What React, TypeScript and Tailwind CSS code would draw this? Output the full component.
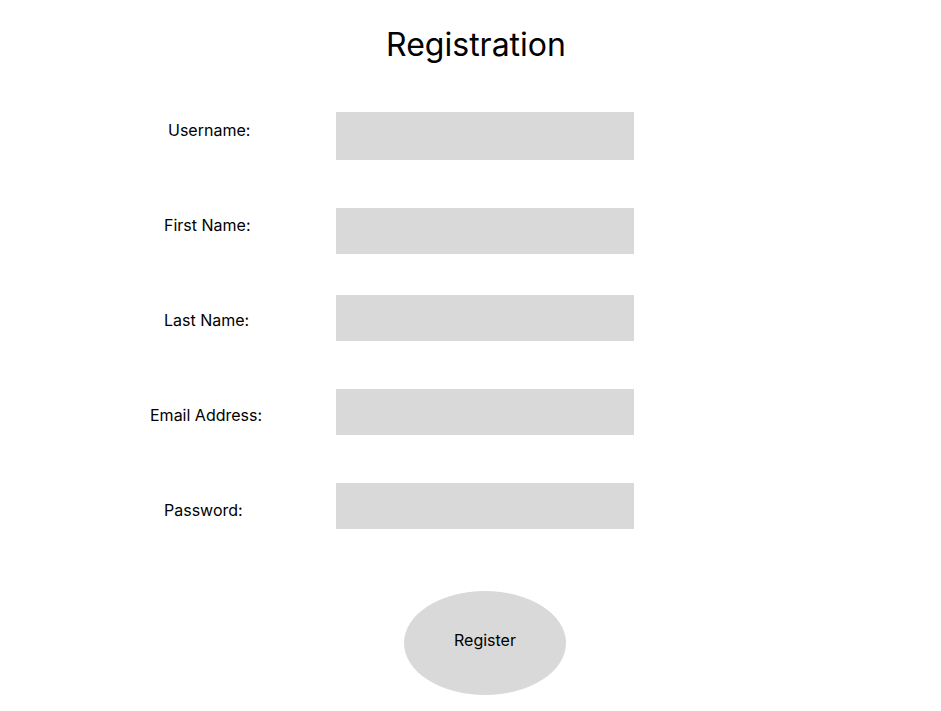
import React from 'react';

type Field = {
  label: string;
  type: string;
  labelPad: string;
  labelTop: string;
  inputH: string;
  rowGap: string;
};

const fields: Field[] = [
  { label: 'Username:', type: 'text', labelPad: 'pl-[168px]', labelTop: 'mt-[6px]', inputH: 'h-[48px]', rowGap: 'mt-0' },
  { label: 'First Name:', type: 'text', labelPad: 'pl-[164px]', labelTop: 'mt-[5px]', inputH: 'h-[46px]', rowGap: 'mt-[48px]' },
  { label: 'Last Name:', type: 'text', labelPad: 'pl-[164px]', labelTop: 'mt-[13px]', inputH: 'h-[46px]', rowGap: 'mt-[41px]' },
  { label: 'Email Address:', type: 'email', labelPad: 'pl-[150px]', labelTop: 'mt-[14px]', inputH: 'h-[46px]', rowGap: 'mt-[48px]' },
  { label: 'Password:', type: 'password', labelPad: 'pl-[164px]', labelTop: 'mt-[15px]', inputH: 'h-[46px]', rowGap: 'mt-[48px]' },
];

const App: React.FC = () => {
  return (
    <div className="min-h-screen w-full bg-white text-black font-['Inter','Liberation_Sans',sans-serif]">
      {/* Title */}
      <div className="pt-[27px] pl-[11px] text-center">
        <h1 className="text-[32px] leading-[36px] font-normal">Registration</h1>
      </div>

      {/* Form */}
      <form className="mt-[49px]" onSubmit={(e) => e.preventDefault()}>
        {fields.map((f) => (
          <div key={f.label} className={`flex items-start ${f.rowGap}`}>
            <label className={`w-[336px] shrink-0 text-base leading-6 ${f.labelPad} ${f.labelTop}`}>
              {f.label}
            </label>
            <input
              type={f.type}
              className={`w-[298px] ${f.inputH} bg-[#d9d9d9] outline-none px-3`}
            />
          </div>
        ))}

        <div className="mt-[62px] pl-[404px]">
          <button
            type="submit"
            className="w-[162px] h-[104px] rounded-[50%] bg-[#d9d9d9] flex items-center justify-center pb-[6px] text-base leading-6"
          >
            Register
          </button>
        </div>
      </form>
    </div>
  );
};

export default App;
